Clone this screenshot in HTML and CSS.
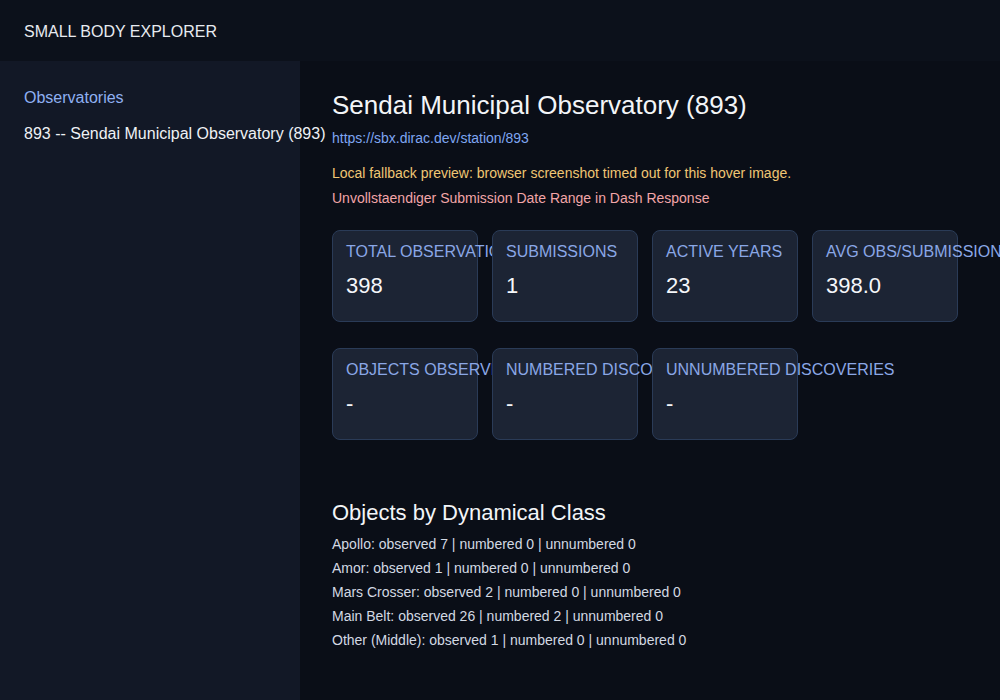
FILE: index.html
```html
<!DOCTYPE html>
<html lang="en">
<head>
    <meta charset="UTF-8">
    <meta name="viewport" content="width=device-width, initial-scale=1.0">
    <title>Small Body Explorer</title>
    <link rel="stylesheet" href="styles.css">
</head>
<body>
<header class="topbar">
    <span class="brand">SMALL BODY EXPLORER</span>
</header>

<div class="layout">
    <aside class="sidebar">
        <div class="side-heading">Observatories</div>
        <div class="side-item">893 -- Sendai Municipal Observatory (893)</div>
    </aside>

    <main class="content">
        <h1 class="station-title">Sendai Municipal Observatory (893)</h1>
        <a class="station-link" href="#">https://sbx.dirac.dev/station/893</a>
        <p class="note note-warn">Local fallback preview: browser screenshot timed out for this hover image.</p>
        <p class="note note-error">Unvollstaendiger Submission Date Range in Dash Response</p>

        <div class="stat-row">
            <div class="stat-card">
                <div class="stat-label">Total Observations</div>
                <div class="stat-value">398</div>
            </div>
            <div class="stat-card">
                <div class="stat-label">Submissions</div>
                <div class="stat-value">1</div>
            </div>
            <div class="stat-card">
                <div class="stat-label">Active Years</div>
                <div class="stat-value">23</div>
            </div>
            <div class="stat-card">
                <div class="stat-label">Avg Obs/Submission</div>
                <div class="stat-value">398.0</div>
            </div>
        </div>

        <div class="stat-row">
            <div class="stat-card">
                <div class="stat-label">Objects Observed</div>
                <div class="stat-value">-</div>
            </div>
            <div class="stat-card">
                <div class="stat-label">Numbered Discoveries</div>
                <div class="stat-value">-</div>
            </div>
            <div class="stat-card">
                <div class="stat-label">Unnumbered Discoveries</div>
                <div class="stat-value">-</div>
            </div>
        </div>

        <h2 class="section-title">Objects by Dynamical Class</h2>
        <div class="class-list">
            <p>Apollo: observed 7 | numbered 0 | unnumbered 0</p>
            <p>Amor: observed 1 | numbered 0 | unnumbered 0</p>
            <p>Mars Crosser: observed 2 | numbered 0 | unnumbered 0</p>
            <p>Main Belt: observed 26 | numbered 2 | unnumbered 0</p>
            <p>Other (Middle): observed 1 | numbered 0 | unnumbered 0</p>
        </div>
    </main>
</div>
</body>
</html>
```

FILE: styles.css
```css
html, body {
    margin: 0;
    padding: 0;
}
body {
    font-family: "Liberation Sans", Arial, sans-serif;
    background-color: #0a0e17;
    color: #f1f5f9;
    overflow: hidden;
}
.topbar {
    height: 61px;
    display: flex;
    align-items: center;
    padding: 2px 24px 0;
    background-color: #0c111b;
    box-sizing: border-box;
}
.brand {
    font-size: 16px;
    color: #e8ebf0;
}
.layout {
    display: flex;
    min-height: calc(100vh - 61px);
}
.sidebar {
    width: 300px;
    flex-shrink: 0;
    padding: 28px 24px;
    box-sizing: border-box;
    background-color: #121826;
    white-space: nowrap;
    position: relative;
    z-index: 1;
}
.side-heading {
    font-size: 16px;
    color: #8fb0f2;
    margin-bottom: 18px;
}
.side-item {
    font-size: 16px;
    color: #eef1f5;
}
.content {
    flex: 1;
    padding: 29px 32px;
}
.station-title {
    margin: 0;
    font-size: 26px;
    font-weight: normal;
    color: #f3f5f8;
}
.station-link {
    display: block;
    margin-top: 9px;
    font-size: 14px;
    color: #7fa6f2;
    text-decoration: none;
}
.note {
    margin: 0;
    font-size: 14px;
}
.note-warn {
    margin-top: 19px;
    color: #f0c674;
}
.note-error {
    margin-top: 9px;
    color: #f2a5a8;
}
.stat-row {
    display: flex;
    gap: 14px;
    margin-top: 26px;
}
.stat-row:first-of-type {
    margin-top: 24px;
}
.stat-card {
    width: 146px;
    height: 92px;
    box-sizing: border-box;
    padding: 12px 13px;
    background-color: #1c2434;
    border: 1px solid #2a3b57;
    border-radius: 8px;
    white-space: nowrap;
}
.stat-label {
    font-size: 16px;
    text-transform: uppercase;
    color: #8aa7e6;
}
.stat-value {
    margin-top: 12px;
    font-size: 22px;
    color: #f5f7fa;
}
.section-title {
    margin: 60px 0 0;
    font-size: 22px;
    font-weight: normal;
    color: #f3f5f8;
}
.class-list {
    margin-top: 6px;
}
.class-list p {
    margin: 0;
    font-size: 14px;
    line-height: 24px;
    color: #d3d9e3;
}
```
